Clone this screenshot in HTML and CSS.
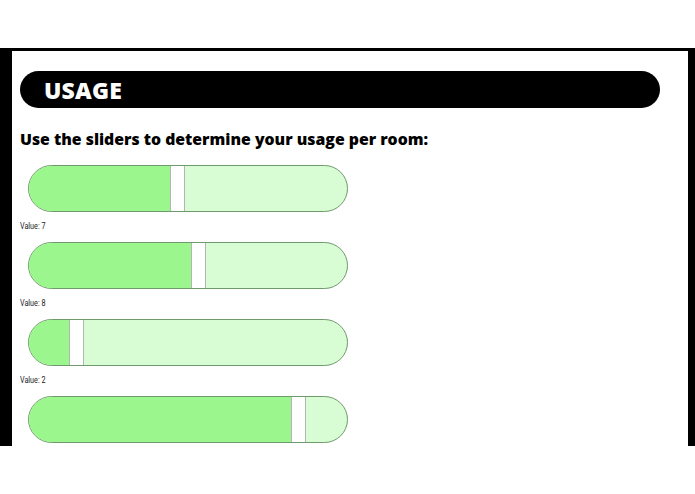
FILE: index.html
```html
<!doctype html>
<html>
<head>
<meta charset="UTF-8">
<title>Usage</title>
<link rel="stylesheet" href="styles.css">
</head>
<body>
<div class="frame">
  <div class="title_bar"><h1>USAGE</h1></div>
  <h2 class="intro">Use the sliders to determine your usage per room:</h2>
  <div class="rooms">
    <div class="room">
      <div class="slider"><div class="fill" style="width: 141px"></div><div class="thumb"></div><div class="rest"></div></div>
      <div class="value">Value: 7</div>
    </div>
    <div class="room">
      <div class="slider"><div class="fill" style="width: 162px"></div><div class="thumb"></div><div class="rest"></div></div>
      <div class="value">Value: 8</div>
    </div>
    <div class="room">
      <div class="slider"><div class="fill" style="width: 40px"></div><div class="thumb"></div><div class="rest"></div></div>
      <div class="value">Value: 2</div>
    </div>
    <div class="room">
      <div class="slider"><div class="fill" style="width: 262px"></div><div class="thumb"></div><div class="rest"></div></div>
    </div>
  </div>
</div>
</body>
</html>
```

FILE: styles.css
```css
body {
   margin: 0;
   background: #fff;
   font-family: "Open Sans", "DejaVu Sans", sans-serif;
}
.frame {
   box-sizing: border-box;
   margin-top: 48px;
   height: 398px;
   border-top: 3px solid #000;
   border-left: 12px solid #000;
   border-right: 7px solid #000;
   overflow: hidden;
   padding: 20px 28px 0 8px;
}
.title_bar {
   height: 37px;
   background: #000;
   border-radius: 19px;
   display: flex;
   align-items: center;
   padding-left: 24px;
}
.title_bar h1 {
   margin: 0;
   color: #fff;
   font-size: 23px;
   font-weight: 800;
   letter-spacing: 0.2px;
}
.intro {
   margin: 19px 0 0 0;
   font-size: 15.8px;
   font-weight: 800;
   color: #000;
   line-height: 24px;
}
.rooms {
   margin-top: 14px;
   padding-left: 8px;
}
.room {
   height: 77px;
}
.slider {
   width: 318px;
   height: 45px;
   border: 1px solid #6f9a6c;
   border-radius: 24px;
   overflow: hidden;
   display: flex;
   background: #d8fcd4;
}
.fill {
   background: #9cf68e;
   flex-shrink: 0;
}
.thumb {
   width: 13px;
   flex-shrink: 0;
   background: #fff;
   border-left: 1px solid #b4b4b4;
   border-right: 1px solid #b4b4b4;
}
.rest {
   flex: 1;
}
.value {
   margin: 9px 0 0 -8px;
   font-family: Roboto, "Liberation Sans", sans-serif;
   font-size: 8.5px;
   line-height: 10px;
   color: #222;
   transform: scaleX(0.85);
   transform-origin: left;
}
```
